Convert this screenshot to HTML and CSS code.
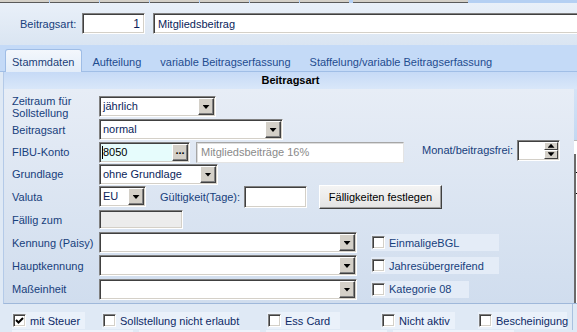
FILE: index.html
```html
<!DOCTYPE html>
<html lang="de">
<head>
    <meta charset="UTF-8">
    <title>Beitragsart</title>
    <link rel="stylesheet" href="styles.css">
</head>
<body>
    <div class="toolbar">
        <span></span><span></span><span></span><span></span><span></span><span></span><span></span><span class="wide"></span>
    </div>

    <div class="head">
        <div class="head-label">Beitragsart:</div>
        <div class="field num">1</div>
        <div class="field name">Mitgliedsbeitrag</div>
    </div>

    <div class="tabs">
        <div class="tab active">Stammdaten</div>
        <div class="tab">Aufteilung</div>
        <div class="tab">variable Beitragserfassung</div>
        <div class="tab">Staffelung/variable Beitragserfassung</div>
    </div>

    <div class="panel">
        <div class="panel-title">Beitragsart</div>
        <div class="panel-body">
            <div class="form">
                <div class="row">
                    <div class="lbl two">Zeitraum für<br>Sollstellung</div>
                    <div class="combo w117"><span class="val">jährlich</span><span class="drop"></span></div>
                </div>
                <div class="row">
                    <div class="lbl">Beitragsart</div>
                    <div class="combo w184"><span class="val">normal</span><span class="drop"></span></div>
                </div>
                <div class="row h22">
                    <div class="lbl">FIBU-Konto</div>
                    <div class="combo fibu w91"><span class="caret"></span><span class="val">8050</span><span class="dots">...</span></div>
                    <div class="text w208">Mitgliedsbeiträge 16%</div>
                    <div class="monat">
                        <div class="lbl-monat">Monat/beitragsfrei:</div>
                        <div class="combo spin w43"><span class="val"></span><span class="spinbtns"><span class="up"></span><span class="down"></span></span></div>
                    </div>
                </div>
                <div class="row h22">
                    <div class="lbl">Grundlage</div>
                    <div class="combo w119"><span class="val">ohne Grundlage</span><span class="drop"></span></div>
                </div>
                <div class="row">
                    <div class="lbl">Valuta</div>
                    <div class="combo w47"><span class="val">EU</span><span class="drop"></span></div>
                    <div class="lbl-gueltig">Gültigkeit(Tage):</div>
                    <div class="combo w63 tall"><span class="val"></span></div>
                    <div class="button">Fälligkeiten festlegen</div>
                </div>
                <div class="row">
                    <div class="lbl">Fällig zum</div>
                    <div class="combo disabled w84"><span class="val"></span></div>
                </div>
                <div class="row">
                    <div class="lbl">Kennung (Paisy)</div>
                    <div class="combo w258"><span class="val"></span><span class="drop"></span></div>
                    <div class="check-group w128"><span class="cb"></span>EinmaligeBGL</div>
                </div>
                <div class="row">
                    <div class="lbl">Hauptkennung</div>
                    <div class="combo w258"><span class="val"></span><span class="drop"></span></div>
                    <div class="check-group w128"><span class="cb"></span>Jahresübergreifend</div>
                </div>
                <div class="row h24">
                    <div class="lbl">Maßeinheit</div>
                    <div class="combo w258"><span class="val"></span><span class="drop"></span></div>
                    <div class="check-group w98"><span class="cb"></span>Kategorie 08</div>
                </div>
            </div>
            <div class="side">
                <div class="side-top"></div>
                <div class="side-box"></div>
                <div class="side-grid"></div>
            </div>
        </div>
    </div>

    <div class="options">
        <div class="opt">
            <span class="cb"><svg width="9" height="9" viewBox="0 0 9 9"><path d="M1 4 L3.5 6.5 L8 2" fill="none" stroke="#000" stroke-width="2"/></svg></span>mit Steuer
        </div>
        <div class="opt"><span class="cb"></span>Sollstellung nicht erlaubt</div>
        <div class="opt"><span class="cb"></span>Ess Card</div>
        <div class="opt"><span class="cb"></span>Nicht aktiv</div>
        <div class="opt"><span class="cb"></span>Bescheinigung</div>
    </div>
    <div class="options-next">
        <span></span><span></span><span></span><span></span>
    </div>
</body>
</html>
```

FILE: styles.css
```css
* {
    box-sizing: border-box;
}
body {
    margin: 0;
    width: 577px;
    height: 332px;
    overflow: hidden;
    font-family: "Liberation Sans", Arial, sans-serif;
    font-size: 11px;
    color: #17407c;
    background: #dfe9f5;
}

/* cut off button row at the very top */
.toolbar {
    display: flex;
    height: 3px;
    background: #b5d0f3;
}
.toolbar span {
    width: 49px;
    margin-right: 1px;
    background: #d4d0c8;
    border-bottom: 1px solid #5a5a5a;
}
.toolbar span.wide {
    width: 115px;
    margin-left: 3px;
}

/* header with number and name */
.head {
    display: flex;
    align-items: center;
    height: 42px;
    padding: 0 0 1px 20px;
    overflow: hidden;
    background: linear-gradient(#e9f0f9, #dae5f2);
}
.head-label {
    width: 62px;
    flex-shrink: 0;
}
.field {
    flex-shrink: 0;
    height: 21px;
    line-height: 17px;
    padding: 2px 4px;
    font-size: 12px;
    color: #0a1e5a;
    background: #fff;
    border: 1px solid;
    border-color: #808080 #fff #fff #808080;
    box-shadow: inset 1px 1px #404040, inset -1px -1px #d4d0c8;
}
.num {
    width: 63px;
    text-align: right;
}
.name {
    width: 440px;
    margin-left: 8px;
    font-size: 11px;
}

/* tabs */
.tabs {
    display: flex;
    align-items: flex-end;
    height: 27px;
    padding-left: 5px;
    background: #c4daf7;
    border-bottom: 1px solid #a0bee6;
}
.tab {
    height: 23px;
    padding: 3px 8px 0 9px;
    line-height: 18px;
    color: #1f4c8f;
    border: 1px solid transparent;
    border-bottom: none;
    margin-bottom: -1px;
}
.tab.active {
    padding: 3px 7px 0 6px;
    background: linear-gradient(#f3f7fc, #e3edf9);
    border-color: #9fbde6;
    border-radius: 3px 3px 0 0;
    color: #1b3f78;
}

/* panel */
.panel {
    margin-left: 3px;
    border-left: 1px solid #b4cae8;
    border-bottom: 1px solid #9fb8da;
}
.panel-title {
    height: 17px;
    line-height: 17px;
    text-align: center;
    font-weight: bold;
    color: #000;
    background: linear-gradient(#c6daf6, #d9e7f9);
}
.panel-body {
    display: flex;
    height: 214px;
    background: linear-gradient(#e7edf6, #d0ddee);
}
.form {
    flex: 1;
    padding: 6px 0 0 8px;
}
.row {
    display: flex;
    align-items: center;
    height: 23px;
}
.row.h22 {
    height: 22px;
}
.row.h24 {
    height: 24px;
}
.lbl {
    width: 87px;
    flex-shrink: 0;
}
.lbl.two {
    line-height: 12px;
}

/* sunken controls */
.combo {
    display: flex;
    flex-shrink: 0;
    height: 21px;
    padding: 1px;
    color: #0a1e5a;
    background: #fff;
    border: 1px solid;
    border-color: #808080 #fff #fff #808080;
    box-shadow: inset 1px 1px #404040, inset -1px -1px #d4d0c8;
}
.combo .val {
    flex: 1;
    padding-left: 2px;
    line-height: 17px;
}
.drop,
.dots {
    display: flex;
    align-items: center;
    justify-content: center;
    width: 16px;
    height: 17px;
    background: #d4d0c8;
    border: 1px solid;
    border-color: #fff #404040 #404040 #fff;
    box-shadow: inset -1px -1px #808080;
}
.drop::after {
    content: "";
    width: 7px;
    height: 4px;
    margin-top: 1px;
    background: #000;
    clip-path: polygon(0 0, 100% 0, 50% 100%);
}
.dots {
    font-weight: bold;
    color: #000;
    line-height: 10px;
    align-items: flex-start;
}
.fibu {
    background: #e6fcfc;
}
.fibu .val {
    color: #000;
    padding-left: 0;
}
.caret {
    width: 1px;
    height: 13px;
    margin: 2px 0 0 1px;
    background: #000;
}
.combo.disabled {
    height: 19px;
    background: #ececec;
}
.combo.tall {
    height: 22px;
}

.w43 { width: 43px; }
.w47 { width: 47px; }
.w63 { width: 63px; }
.w84 { width: 84px; }
.w91 { width: 91px; }
.w117 { width: 117px; }
.w119 { width: 119px; }
.w184 { width: 184px; }
.w208 { width: 208px; }
.w258 { width: 258px; }
.w98 { width: 98px; }
.w128 { width: 128px; }

.text {
    height: 21px;
    margin-left: 6px;
    padding: 2px 4px;
    line-height: 15px;
    color: #8a8a8a;
    background: #fff;
    border: 1px solid;
    border-color: #a6a6a6 #e4e4e4 #e4e4e4 #a6a6a6;
    box-shadow: inset 1px 1px #dcdcdc;
}

.monat {
    display: flex;
    align-items: center;
    margin: 0 0 4px 18px;
}
.lbl-monat {
    width: 95px;
}
.spin {
    height: 21px;
}
.spinbtns {
    display: flex;
    flex-direction: column;
    width: 14px;
}
.spinbtns span {
    display: flex;
    align-items: center;
    justify-content: center;
    height: 8.5px;
    background: #d4d0c8;
    border: 1px solid;
    border-color: #fff #404040 #404040 #fff;
}
.spinbtns span::after {
    content: "";
    width: 7px;
    height: 4px;
    background: #000;
}
.spinbtns .up::after {
    clip-path: polygon(50% 0, 100% 100%, 0 100%);
}
.spinbtns .down::after {
    clip-path: polygon(0 0, 100% 0, 50% 100%);
}

.lbl-gueltig {
    width: 84px;
    margin-left: 14px;
}
.button {
    width: 123px;
    height: 24px;
    margin-left: 12px;
    line-height: 22px;
    text-align: center;
    color: #000;
    background: linear-gradient(#f4f4f4, #e4e4e4);
    border: 1px solid;
    border-color: #fff #404040 #404040 #fff;
    box-shadow: inset -1px -1px #a0a0a0;
}

/* checkboxes */
.cb {
    display: inline-flex;
    align-items: center;
    justify-content: center;
    width: 13px;
    height: 13px;
    margin: 0 4px 0 1px;
    background: #fff;
    border: 1px solid;
    border-color: #808080 #fff #fff #808080;
    box-shadow: inset 1px 1px #404040, inset -1px -1px #d4d0c8;
    flex-shrink: 0;
}
.check-group {
    display: flex;
    align-items: center;
    height: 17px;
    margin-left: 14px;
    background: #e4ecf7;
}

/* cut off grid at the right edge */
.side {
    display: flex;
    flex-direction: column;
    width: 3px;
}
.side-top {
    height: 51px;
    background: linear-gradient(#d4e3f6, #c3d8f2);
}
.side-box {
    height: 14px;
    background: #fff;
    border-top: 1px solid #b8b8b8;
}
.side-grid {
    flex: 1;
    border-left: 2px solid #6a6a6a;
    background:
        linear-gradient(#000, #000) 0 18px / 2px 1px no-repeat,
        linear-gradient(#000, #000) 0 39px / 2px 1px no-repeat,
        #fff;
}

/* bottom options */
.options {
    display: flex;
    height: 26px;
    padding: 8px 0 0 12px;
    width: 573px;
    border-right: 1px solid #a9c0df;
}
.opt {
    display: flex;
    align-items: center;
    height: 17px;
    white-space: nowrap;
    color: #0d2a66;
    background: #eaf1fa;
}
.opt:nth-child(1) { width: 73px; }
.opt:nth-child(2) { width: 137px; margin-left: 17px; }
.opt:nth-child(3) { width: 73px; margin-left: 28px; }
.opt:nth-child(4) { width: 74px; margin-left: 41px; }
.opt:nth-child(5) { width: 89px; margin-left: 23px; }

.options-next {
    display: flex;
    height: 2px;
    padding-left: 12px;
}
.options-next span {
    width: 121px;
    margin-right: 6px;
    background: #eef3fb;
}
```
